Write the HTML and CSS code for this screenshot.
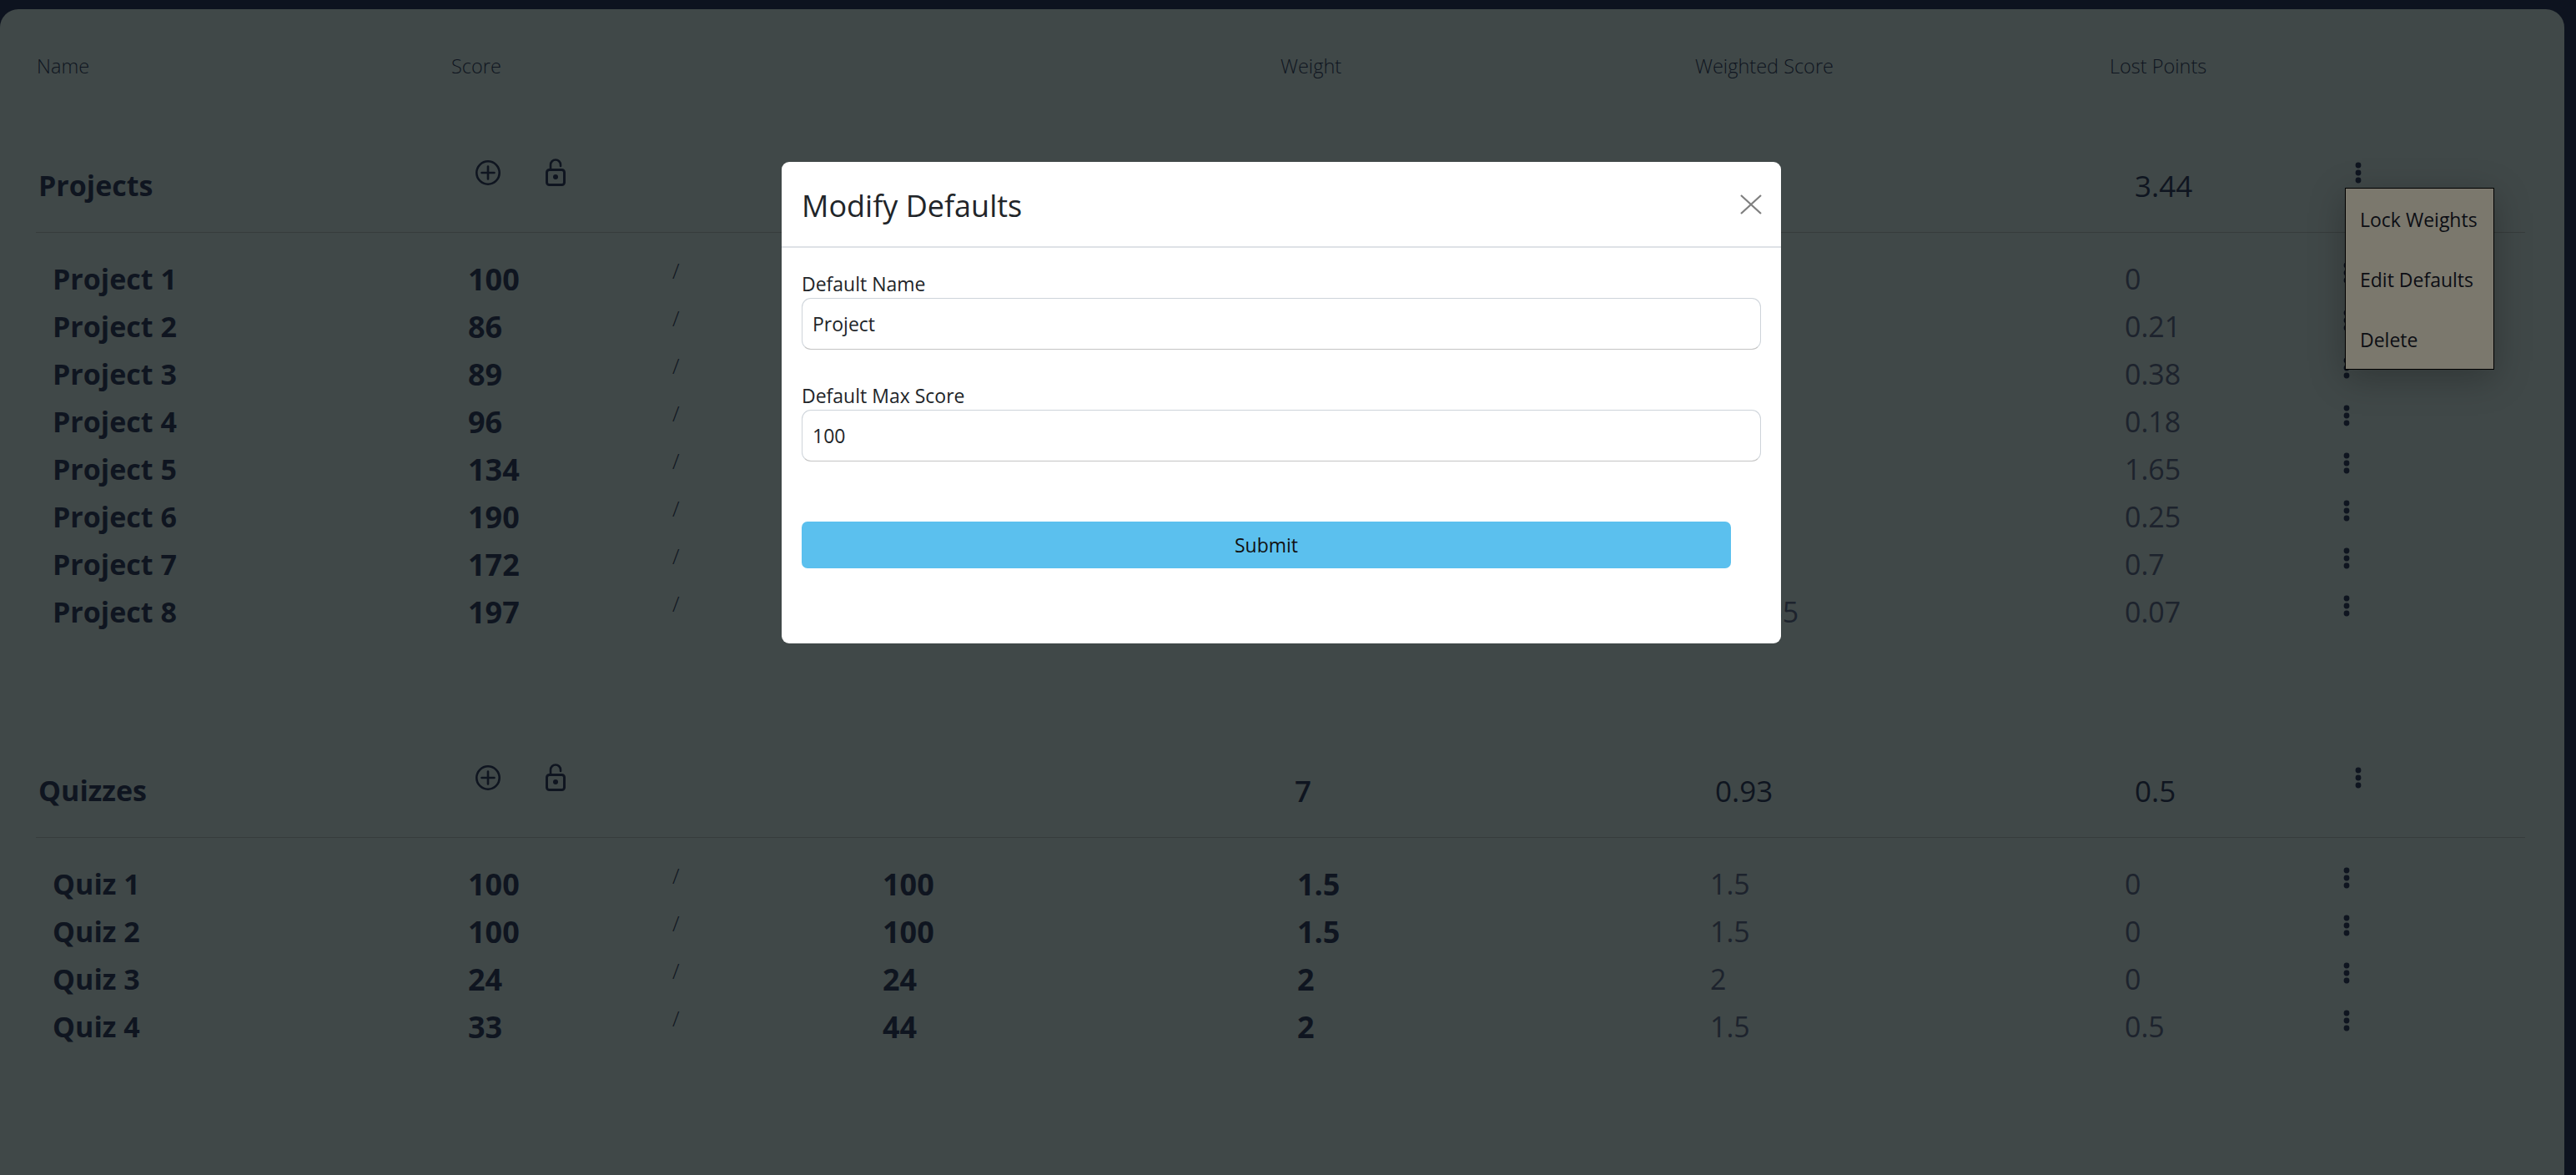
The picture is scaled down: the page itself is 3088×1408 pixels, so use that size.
FILE: index.html
```html
<!DOCTYPE html>
<html lang="en">
<head>
    <meta charset="UTF-8">
    <meta name="viewport" content="width=device-width, initial-scale=1.0">
    <title>Grades</title>
    <link rel="stylesheet" href="styles.css">
</head>
<body>
    <svg class="icon-defs" width="0" height="0">
      <symbol id="plus" viewBox="0 0 36 36">
        <circle cx="18" cy="18" r="13.7" fill="none" stroke="currentColor" stroke-width="2.6"/>
        <path d="M18 10.5v15M10.5 18h15" fill="none" stroke="currentColor" stroke-width="2.6" stroke-linecap="round"/>
      </symbol>
      <symbol id="unlock" viewBox="0 0 36 36">
        <rect x="7.5" y="14.5" width="21" height="18" rx="3" fill="none" stroke="currentColor" stroke-width="3"/>
        <path d="M12 14V8.5a6 6 0 0 1 12 0V10" fill="none" stroke="currentColor" stroke-width="2.6" stroke-linecap="round"/>
        <circle cx="18" cy="23" r="3" fill="currentColor"/>
      </symbol>
      <symbol id="dots" viewBox="0 0 24 36">
        <circle cx="12" cy="9" r="3.4" fill="currentColor"/>
        <circle cx="12" cy="18" r="3.4" fill="currentColor"/>
        <circle cx="12" cy="27" r="3.4" fill="currentColor"/>
      </symbol>
    </svg>

    <div class="panel">
      <div class="columns table-head">
        <div>Name</div>
        <div>Score</div>
        <div></div>
        <div>Weight</div>
        <div>Weighted Score</div>
        <div>Lost Points</div>
      </div>

      <!-- Projects: the middle columns sit behind the modal -->
      <section class="group">
        <div class="columns group-head">
          <h2>Projects</h2>
          <div class="group-tools">
            <svg class="tool"><use href="#plus"/></svg>
            <svg class="tool"><use href="#unlock"/></svg>
          </div>
          <div></div>
          <div class="total"></div>
          <div class="total-score"></div>
          <div class="total-lost"><span>3.44</span><svg class="dots"><use href="#dots"/></svg></div>
        </div>

        <div class="columns item"><div class="item-name">Project 1</div><div class="item-score"><b>100</b><i>/</i></div><div></div><div></div><div></div><div class="item-lost"><span>0</span><svg class="dots"><use href="#dots"/></svg></div></div>
        <div class="columns item"><div class="item-name">Project 2</div><div class="item-score"><b>86</b><i>/</i></div><div></div><div></div><div></div><div class="item-lost"><span>0.21</span><svg class="dots"><use href="#dots"/></svg></div></div>
        <div class="columns item"><div class="item-name">Project 3</div><div class="item-score"><b>89</b><i>/</i></div><div></div><div></div><div></div><div class="item-lost"><span>0.38</span><svg class="dots"><use href="#dots"/></svg></div></div>
        <div class="columns item"><div class="item-name">Project 4</div><div class="item-score"><b>96</b><i>/</i></div><div></div><div></div><div></div><div class="item-lost"><span>0.18</span><svg class="dots"><use href="#dots"/></svg></div></div>
        <div class="columns item"><div class="item-name">Project 5</div><div class="item-score"><b>134</b><i>/</i></div><div></div><div></div><div></div><div class="item-lost"><span>1.65</span><svg class="dots"><use href="#dots"/></svg></div></div>
        <div class="columns item"><div class="item-name">Project 6</div><div class="item-score"><b>190</b><i>/</i></div><div></div><div></div><div></div><div class="item-lost"><span>0.25</span><svg class="dots"><use href="#dots"/></svg></div></div>
        <div class="columns item"><div class="item-name">Project 7</div><div class="item-score"><b>172</b><i>/</i></div><div></div><div></div><div></div><div class="item-lost"><span>0.7</span><svg class="dots"><use href="#dots"/></svg></div></div>
        <div class="columns item"><div class="item-name">Project 8</div><div class="item-score"><b>197</b><i>/</i></div><div></div><div></div><div class="item-weighted">4.9265</div><div class="item-lost"><span>0.07</span><svg class="dots"><use href="#dots"/></svg></div></div>

        <!-- group menu, left open -->
        <div class="group-menu">
          <div>Lock Weights</div>
          <div>Edit Defaults</div>
          <div>Delete</div>
        </div>
      </section>

      <!-- Quizzes -->
      <section class="group">
        <div class="columns group-head">
          <h2>Quizzes</h2>
          <div class="group-tools">
            <svg class="tool"><use href="#plus"/></svg>
            <svg class="tool"><use href="#unlock"/></svg>
          </div>
          <div></div>
          <div class="total">7</div>
          <div class="total-score">0.93</div>
          <div class="total-lost"><span>0.5</span><svg class="dots"><use href="#dots"/></svg></div>
        </div>

        <div class="columns item"><div class="item-name">Quiz 1</div><div class="item-score"><b>100</b><i>/</i></div><div class="item-max">100</div><div class="item-weight">1.5</div><div class="item-weighted">1.5</div><div class="item-lost"><span>0</span><svg class="dots"><use href="#dots"/></svg></div></div>
        <div class="columns item"><div class="item-name">Quiz 2</div><div class="item-score"><b>100</b><i>/</i></div><div class="item-max">100</div><div class="item-weight">1.5</div><div class="item-weighted">1.5</div><div class="item-lost"><span>0</span><svg class="dots"><use href="#dots"/></svg></div></div>
        <div class="columns item"><div class="item-name">Quiz 3</div><div class="item-score"><b>24</b><i>/</i></div><div class="item-max">24</div><div class="item-weight">2</div><div class="item-weighted">2</div><div class="item-lost"><span>0</span><svg class="dots"><use href="#dots"/></svg></div></div>
        <div class="columns item"><div class="item-name">Quiz 4</div><div class="item-score"><b>33</b><i>/</i></div><div class="item-max">44</div><div class="item-weight">2</div><div class="item-weighted">1.5</div><div class="item-lost"><span>0.5</span><svg class="dots"><use href="#dots"/></svg></div></div>
      </section>
    </div>

    <!-- Modify Defaults modal -->
    <div class="modal">
      <div class="modal-header">
        <h1>Modify Defaults</h1>
        <svg class="modal-close" viewBox="0 0 26 24"><path d="M1 1l24 22M25 1L1 23" fill="none" stroke="currentColor" stroke-width="2.2"/></svg>
      </div>
      <form class="modal-body">
        <label for="defaultName">Default Name</label>
        <input type="text" id="defaultName" value="Project">
        <label for="defaultMax">Default Max Score</label>
        <input type="text" id="defaultMax" value="100">
        <button type="button">Submit</button>
      </form>
    </div>
</body>
</html>
```

FILE: styles.css
```css
* {
  box-sizing: border-box;
}

body {
  margin: 0;
  height: 1408px;
  overflow: hidden;
  padding-top: 11px;
  background-color: #0d131f;
  color: #0f1520;
  font-family: "Open Sans", "Noto Sans", sans-serif;
  font-size: 23px;
}

.icon-defs {
  position: absolute;
}

.panel {
  width: 3074px;
  height: 1397px;
  padding: 50px 47px 0 44px;
  background-color: #404848;
  border-radius: 22px 22px 0 0;
}

.columns {
  display: grid;
  grid-template-columns: repeat(6, 497px);
}

.table-head {
  height: 36px;
  font-size: 23.5px;
  line-height: 36px;
  font-weight: 300;
  margin-bottom: 89px;
}

.group {
  position: relative;
  margin-bottom: 149px;
}

.group-head {
  height: 93px;
  border-bottom: 1px solid #363c3c;
  margin-bottom: 27px;
  margin-left: -1px;
  font-size: 35px;
  line-height: 57px;
}

.group-head h2 {
  margin: 0;
  padding: 8px 0 0 3px;
  font-size: 34px;
  font-weight: 700;
}

.group-tools {
  display: flex;
  gap: 45px;
  padding: 3px 0 0 27px;
}

.tool {
  width: 36px;
  height: 36px;
}

.total {
  padding: 8px 0 0 18px;
  font-weight: 600;
}

.total-score {
  padding: 8px 0 0 25px;
  font-weight: 400;
}

.total-lost {
  display: flex;
  padding: 8px 0 0 31px;
  font-weight: 400;
}

.total-lost span {
  width: 256px;
}

.total-lost .dots {
  margin-top: -5px;
}

.dots {
  flex: none;
  width: 24px;
  height: 36px;
}

.item {
  height: 57px;
  line-height: 57px;
  font-size: 34px;
}

.item-name {
  padding-left: 19px;
  font-weight: 700;
}

.item-score {
  display: flex;
  padding-left: 20px;
}

.item-score b {
  width: 245px;
  font-size: 36px;
  font-weight: 700;
}

.item-score i {
  font-size: 25px;
  font-style: normal;
  font-weight: 300;
  line-height: 36px;
}

.item-max,
.item-weight {
  padding-left: 20px;
  font-size: 36px;
  font-weight: 700;
}

.item-weighted {
  padding-left: 18px;
  color: #1d232d;
  font-weight: 400;
}

.item-lost {
  display: flex;
  padding-left: 18px;
  color: #1d232d;
  font-weight: 400;
}

.item-lost span {
  width: 254px;
}

.item-lost .dots {
  margin-top: 3px;
  color: #0f1520;
}

/* stays open over the first rows */
.group-menu {
  position: absolute;
  top: 39px;
  right: 37px;
  width: 179px;
  border: 1px solid #000;
  background-color: #7b786d;
  box-shadow: 0 10px 40px rgba(0, 0, 0, 0.25);
  color: #0c0e14;
}

.group-menu div {
  height: 72px;
  padding-left: 17px;
  line-height: 74px;
}

.modal {
  position: absolute;
  left: 937px;
  top: 194px;
  width: 1198px;
  background-color: #fff;
  border-radius: 9px;
  color: #212529;
}

.modal-header {
  display: flex;
  justify-content: space-between;
  height: 103px;
  padding: 26px 23px 0 24px;
  border-bottom: 2px solid #dee2e6;
}

.modal-header h1 {
  margin: 0;
  font-size: 36px;
  font-weight: 400;
  line-height: 54px;
}

.modal-close {
  width: 26px;
  height: 24px;
  margin-top: 13px;
  color: #7f7f7f;
}

.modal-body {
  padding: 26px 24px 90px;
}

.modal-body label {
  display: block;
  height: 34px;
  line-height: 34px;
}

.modal-body input {
  display: block;
  width: 100%;
  height: 62px;
  margin-bottom: 38px;
  padding: 0 12px;
  border: 1px solid #ced4da;
  border-bottom-color: #c4c4c4;
  border-radius: 11px;
  color: #212529;
  font-family: inherit;
  font-size: 23px;
}

.modal-body input:last-of-type {
  margin-bottom: 72px;
}

.modal-body button {
  display: block;
  width: 1114px;
  height: 56px;
  border: none;
  border-radius: 7px;
  background-color: #5bc0ee;
  color: #111;
  font-family: inherit;
  font-size: 23px;
}
```
